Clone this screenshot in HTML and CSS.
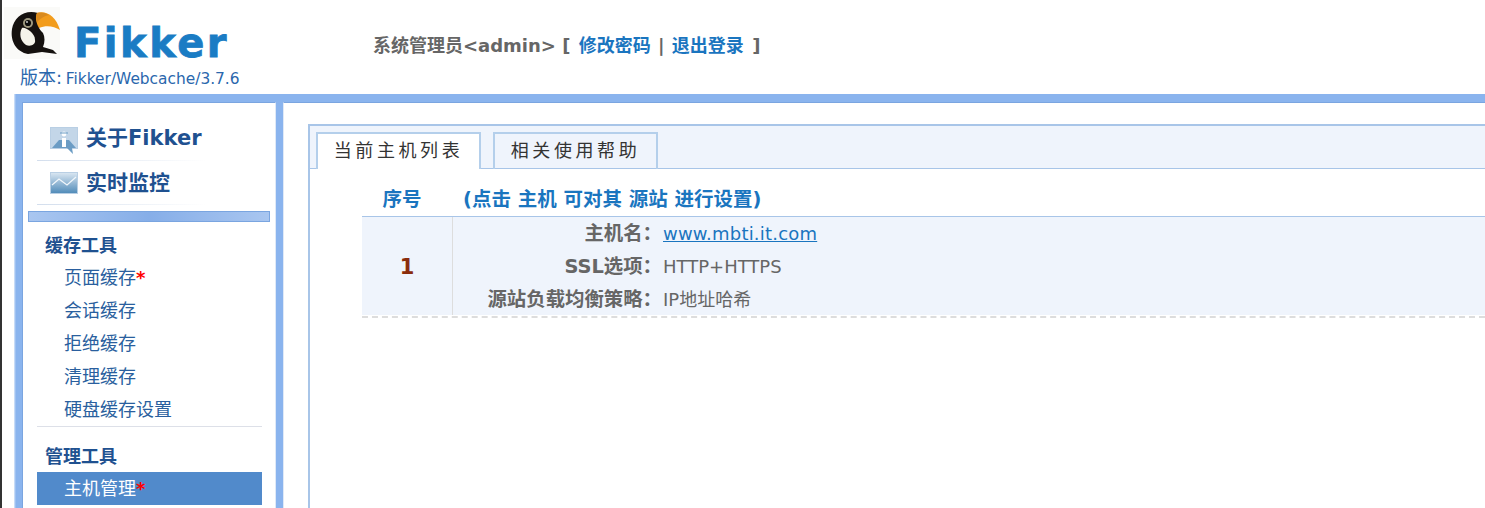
FILE: index.html
```html
<!DOCTYPE html>
<html>
<head>
    <meta charset="utf-8">
    <title>Fikker</title>
    <link rel="stylesheet" href="styles.css">
</head>
<body>

<div class="header">
    <div class="brand">
        <div class="logo">
            <svg class="toucan" viewBox="4 7 56 52" width="56" height="52">
                <rect x="4" y="7" width="56" height="52" fill="#fafaf8"/>
                <path d="M38 13C25 9 14 17 12 29C10 42 17 52 28 54L42 52L57 54L53 50L43 47C45 42 45 37 43 33C41 31 39 29 39 27Z" fill="#15110f"/>
                <path d="M37 13C46 10 56 16 60 30C54 26 46 25 39 28C36 23 35 17 37 13Z" fill="#f29c1c"/>
                <path d="M37 13C42 12 46 13 49 15C44 16 40 19 37 22C36 19 36 15 37 13Z" fill="#d98a1e"/>
                <path d="M22 28C19 33 20 41 26 45C31 47 36 44 35 40C35 36 33 34 30 31C27 29 24 27 22 28Z" fill="#f6f4ea"/>
                <circle cx="28" cy="23" r="5" fill="#a09a80"/>
                <circle cx="28" cy="23" r="3.1" fill="#0c0c0c"/>
                <circle cx="27" cy="22" r=".9" fill="#ddd"/>
            </svg>
            <span class="wordmark">Fikker</span>
        </div>
        <div class="version">版本: <span>Fikker/Webcache/3.7.6</span></div>
    </div>
    <div class="userbar">
        系统管理员&lt;admin&gt; <i>[</i> <a href="#" class="first">修改密码</a> <i class="sep">|</i> <a href="#">退出登录</a> <i class="last">]</i>
    </div>
</div>

<div class="frame">
    <div class="sidebar">
        <div class="toplink">
            <svg class="about" viewBox="0 0 28 28" width="28" height="28">
                <rect x=".5" y=".5" width="27" height="21" fill="#c3d6e8" stroke="#b9cfe4"/>
                <path d="M2 21L9 13H19L26 21H22L23 27L17 21Z" fill="#6b9cc4"/>
                <rect x="12" y="11" width="4" height="9" fill="#fff"/>
                <circle cx="14" cy="7" r="2.4" fill="#fff"/>
                <path d="M10 6H18" stroke="#6b9cc4" stroke-width="1"/>
            </svg>
            <span>关于Fikker</span>
        </div>
        <div class="toplink">
            <svg viewBox="0 0 28 22" width="28" height="22">
                <defs>
                    <linearGradient id="chart" x1="0" y1="0" x2="0" y2="1">
                        <stop offset="0" stop-color="#dbe7f2"/>
                        <stop offset="1" stop-color="#4f8ab8"/>
                    </linearGradient>
                </defs>
                <rect x=".5" y=".5" width="27" height="21" fill="url(#chart)" stroke="#b9cfe4"/>
                <path d="M2 13L9 7L17 13L26 5" fill="none" stroke="#f2f7fb" stroke-width="1.2"/>
            </svg>
            <span>实时监控</span>
        </div>
        <div class="splitter"></div>

        <div class="group">
            <h3>缓存工具</h3>
            <a href="#">页面缓存<b>*</b></a>
            <a href="#">会话缓存</a>
            <a href="#">拒绝缓存</a>
            <a href="#">清理缓存</a>
            <a href="#">硬盘缓存设置</a>
        </div>
        <div class="group">
            <h3>管理工具</h3>
            <a href="#" class="active">主机管理<b>*</b></a>
        </div>
    </div>

    <div class="main">
        <div class="panel">
            <div class="tabs">
                <div class="tab current">当前主机列表</div>
                <div class="tab">相关使用帮助</div>
            </div>
            <div class="listing">
                <div class="listhead">
                    <div class="col-num">序号</div>
                    <div class="col-info">(点击 主机 可对其 源站 进行设置)</div>
                </div>
                <div class="hostrow">
                    <div class="col-num num">1</div>
                    <div class="hostinfo">
                        <div class="line"><label>主机名：</label><a href="#">www.mbti.it.com</a></div>
                        <div class="line"><label>SSL选项：</label><span>HTTP+HTTPS</span></div>
                        <div class="line"><label>源站负载均衡策略：</label><span>IP地址哈希</span></div>
                    </div>
                </div>
            </div>
        </div>
    </div>
</div>

</body>
</html>
```

FILE: styles.css
```css
html, body {
    margin: 0;
    padding: 0;
    height: 508px;
    overflow: hidden;
    background: #fff;
}
body {
    border-left: 2px solid #333;
    font-family: "DejaVu Sans", "Noto Sans CJK SC", sans-serif;
    font-size: 18px;
    color: #666;
}
a {
    text-decoration: none;
}

/* header */
.header {
    display: flex;
    height: 94px;
}
.brand {
    width: 369px;
    padding-left: 2px;
}
.logo {
    display: flex;
    padding: 7px 0 0 0;
    height: 59px;
}
.toucan {
    flex: none;
}
.wordmark {
    margin: 13px 0 0 14px;
    font-size: 40px;
    line-height: 46px;
    font-weight: bold;
    letter-spacing: 2.5px;
    color: #1a7cc4;
    -webkit-text-stroke: 0.8px #1a7cc4;
}
.version {
    margin: -1px 0 0 16px;
    font-size: 18px;
    line-height: 26px;
    color: #2a67ad;
}
.version span {
    margin-left: -2px;
    font-size: 15.4px;
}
.userbar {
    padding-top: 33px;
    line-height: 26px;
    font-size: 18px;
    font-weight: bold;
    white-space: nowrap;
}
.userbar a {
    color: #1a75bf;
}
.userbar i {
    font-style: normal;
}
.userbar .first {
    margin-left: 2px;
}
.userbar .sep {
    margin: 0 1px;
}
.userbar .last {
    margin-left: 2px;
}

/* frame */
.frame {
    display: flex;
    gap: 7px;
    margin-left: 12px;
    padding: 8px 0 0 8px;
    height: 414px;
    box-sizing: border-box;
    background: linear-gradient(to right, #dbe8fa 0, #8ab4ee 2px);
}
.sidebar {
    flex: none;
    width: 254px;
    box-sizing: border-box;
    padding: 12px 5px 0 5px;
    background: #fff;
    border-top: 1px solid #7aa5e0;
    border-left: 1px solid #7aa5e0;
    border-right: 1px solid #dfe9f7;
}
.toplink {
    display: flex;
    align-items: center;
    gap: 8px;
    height: 44px;
    margin: 0 8px 0 9px;
    padding-left: 13px;
    box-sizing: border-box;
    border-bottom: 1px solid;
    border-image: linear-gradient(to right, #d3deed, #fff 75%) 1;
    font-size: 21px;
    font-weight: bold;
    color: #1f5190;
}
.toplink:first-child {
    height: 46px;
}
.toplink span {
    margin-bottom: 4px;
}
.toplink svg {
    flex: none;
}
.toplink .about {
    margin-top: 7px;
}
.splitter {
    height: 9px;
    margin: 6px 0 0 0;
    border: 1px solid #7aa5e0;
    background: linear-gradient(to right, #a9c6f0, #86aee8 50%, #a9c6f0);
}
.group {
    margin: 0 8px 0 9px;
    padding-top: 7px;
}
.group + .group {
    padding-top: 13px;
    border-top: 1px solid #dde0e8;
}
.group h3 {
    margin: 0;
    padding: 2px 0 0 8px;
    font-size: 18px;
    line-height: 30px;
    font-weight: bold;
    color: #1f5190;
}
.group a {
    display: block;
    height: 33px;
    padding-left: 27px;
    font-size: 18px;
    line-height: 33px;
    color: #2a5f9e;
}
.group a b {
    color: #f00;
}
.group a.active {
    background: #518acb;
    color: #fff;
}

/* main panel */
.main {
    flex: 1;
    padding: 21px 0 0 24px;
    background: #fff;
    border-top: 1px solid #7aa5e0;
    border-left: 1px solid #dfe9f7;
}
.panel {
    height: 100%;
    border-top: 2px solid #a8c5e8;
    border-left: 2px solid #a8c5e8;
}
.tabs {
    display: flex;
    gap: 12px;
    height: 43px;
    box-sizing: border-box;
    padding: 6px 0 0 6px;
    background: #eff4fc;
    border-bottom: 1px solid #a8c5e8;
}
.tab {
    width: 165px;
    height: 37px;
    box-sizing: border-box;
    border: 2px solid #b4cfeb;
    border-bottom: 0;
    font-size: 18px;
    line-height: 33px;
    letter-spacing: 3.6px;
    text-align: center;
    color: #333;
}
.tab.current {
    background: #fff;
}
.listing {
    padding: 11px 0 0 52px;
}
.listhead {
    display: flex;
    height: 37px;
    box-sizing: border-box;
    border-bottom: 1px solid #a8c5e8;
    font-size: 19.5px;
    line-height: 40px;
    font-weight: bold;
    color: #1a75bf;
}
.col-num {
    flex: none;
    width: 80px;
    padding-right: 10px;
    text-align: center;
}
.col-info {
    padding-left: 11px;
}
.hostrow {
    display: flex;
    height: 101px;
    box-sizing: border-box;
    background: linear-gradient(#eff4fc, #eff4fc) no-repeat top / 100% 98px;
    border-bottom: 2px dashed #ddd;
}
.num {
    width: 90px;
    padding-right: 0;
    height: 98px;
    font-size: 21px;
    line-height: 100px;
    font-weight: bold;
    color: #8a2c0c;
    border-right: 1px solid #ddd;
}
.hostinfo {
    flex: 1;
}
.line {
    display: flex;
    height: 33px;
    line-height: 33px;
    font-size: 18px;
}
.line label {
    flex: none;
    width: 209px;
    text-align: right;
    font-size: 19.4px;
    font-weight: bold;
}
.line a {
    margin-left: 1px;
    letter-spacing: .2px;
    color: #1a75bf;
    text-decoration: underline;
}
.line span {
    margin-left: 1px;
}
```
